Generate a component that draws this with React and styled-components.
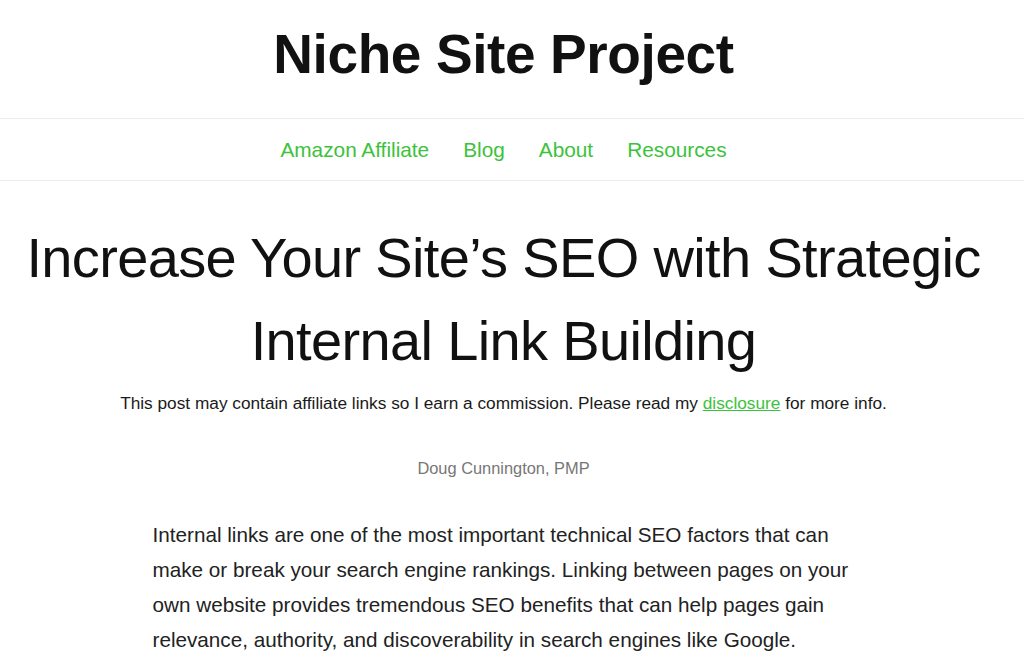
import React from 'react';
import styled, { createGlobalStyle } from 'styled-components';

const GlobalStyle = createGlobalStyle`
  html, body {
    margin: 0;
    padding: 0;
    background: #fff;
    overflow: hidden;
  }
  body {
    font-family: 'Liberation Sans', Arial, sans-serif;
    color: #222;
  }
`;

const navItems = ['Amazon Affiliate', 'Blog', 'About', 'Resources'];

const App = () => {
  return (
    <>
      <GlobalStyle />
      <Header>
        <Inner>
          <SiteTitle>Niche Site Project</SiteTitle>
        </Inner>
      </Header>
      <NavBar>
        <Inner>
          <NavList>
            {navItems.map((item) => (
              <NavLink key={item} href="#">
                {item}
              </NavLink>
            ))}
          </NavList>
        </Inner>
      </NavBar>
      <Inner>
        <Article>
          <PostTitle>
            Increase Your Site’s SEO with Strategic Internal Link Building
          </PostTitle>
          <Disclaimer>
            This post may contain affiliate links so I earn a commission. Please
            read my <TextLink href="#">disclosure</TextLink> for more info.
          </Disclaimer>
          <Author>Doug Cunnington, PMP</Author>
          <Body>
            Internal links are one of the most important technical SEO factors
            that can make or break your search engine rankings. Linking between
            pages on your own website provides tremendous SEO benefits that can
            help pages gain relevance, authority, and discoverability in search
            engines like Google.
          </Body>
        </Article>
      </Inner>
    </>
  );
};

export default App;

const Inner = styled.div`
  width: 1007px;
  box-sizing: border-box;
`;

const Header = styled.header`
  border-bottom: 1px solid #ececec;
  padding: 21px 0 31px;
`;

const SiteTitle = styled.h1`
  margin: 0;
  text-align: center;
  font-size: 55px;
  line-height: 66px;
  font-weight: 700;
  letter-spacing: -0.4px;
  color: #111;
`;

const NavBar = styled.nav`
  border-bottom: 1px solid #ececec;
  padding: 16px 0 15px;
`;

const NavList = styled.div`
  display: flex;
  justify-content: center;
  gap: 34px;
`;

const NavLink = styled.a`
  font-size: 20.8px;
  line-height: 30px;
  color: #3cc23c;
  text-decoration: none;
`;

const Article = styled.main`
  display: flex;
  flex-direction: column;
  align-items: center;
  padding: 35px 20px 0;
`;

const PostTitle = styled.h2`
  margin: 0;
  text-align: center;
  font-size: 56px;
  line-height: 83px;
  font-weight: 400;
  letter-spacing: -0.65px;
  color: #111;
`;

const Disclaimer = styled.p`
  margin: 8px 0 0;
  text-align: center;
  font-size: 17.25px;
  line-height: 27px;
  color: #1a1a1a;
`;

const TextLink = styled.a`
  color: #3cc23c;
  text-decoration: underline;
`;

const Author = styled.div`
  margin-top: 39px;
  font-size: 16.4px;
  line-height: 24px;
  color: #777;
`;

const Body = styled.p`
  margin: 37px 0 0;
  max-width: 702px;
  font-size: 20.7px;
  line-height: 35px;
  color: #222;
`;
